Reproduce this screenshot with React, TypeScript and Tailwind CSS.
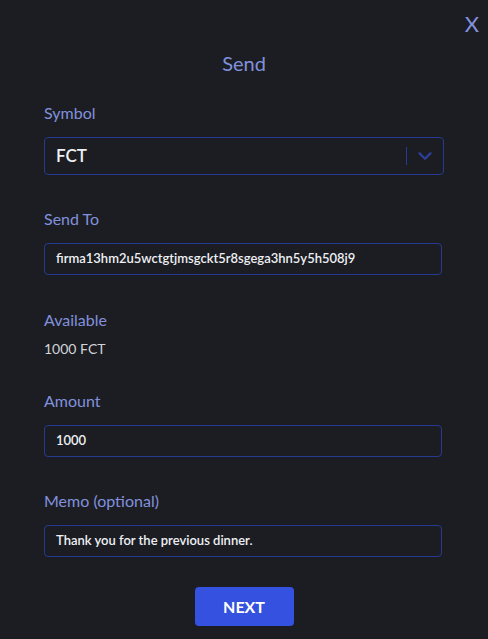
import { ChevronDown } from "lucide-react";

const font = { fontFamily: "Lato, 'Noto Sans', sans-serif" };

function Field({ label, value }: { label: string; value: string }) {
  return (
    <div className="mt-[32px]">
      <label className="block text-[16px] leading-[24px] text-[#8191de]">
        {label}
      </label>
      <div className="mt-[12px] h-[32px] mr-[2px] rounded-[4px] border border-[#263a91] flex items-center px-[11px]">
        <span className="text-[13px] font-semibold text-[#eef0f4]">{value}</span>
      </div>
    </div>
  );
}

export default function App() {
  return (
    <div
      className="relative w-[488px] h-[639px] bg-[#1c1d22] overflow-hidden"
      style={font}
    >
      <button className="absolute top-[10px] right-[9px] text-[22px] leading-[28px] text-[#8191de]">
        X
      </button>
      <div className="px-[44px] pt-[49px]">
        <h2 className="text-center text-[20px] leading-[28px] text-[#8191de]">
          Send
        </h2>

        <div className="mt-[24px]">
          <label className="block text-[16px] leading-[24px] text-[#8191de]">
            Symbol
          </label>
          <div className="mt-[12px] h-[38px] rounded-[4px] border border-[#263a91] flex items-center pl-[11px]">
            <span className="flex-1 text-[17px] font-semibold text-[#eef0f4]">
              FCT
            </span>
            <span className="w-px h-[18px] bg-[#263a91]" />
            <span className="w-[36px] flex justify-center">
              <ChevronDown size={22} strokeWidth={2.6} className="text-[#2c3f9c]" />
            </span>
          </div>
        </div>

        <Field label="Send To" value="firma13hm2u5wctgtjmsgckt5r8sgega3hn5y5h508j9" />

        <div className="mt-[33px]">
          <label className="block text-[16px] leading-[24px] text-[#8191de]">
            Available
          </label>
          <p className="mt-[7px] text-[14px] leading-[20px] text-[#d2d3d8]">
            1000 FCT
          </p>
        </div>

        <div className="-mt-[2px]">
          <Field label="Amount" value="1000" />
        </div>
        <Field label="Memo (optional)" value="Thank you for the previous dinner." />

        <div className="mt-[30px] flex justify-center">
          <button className="w-[99px] h-[39px] rounded-[4px] bg-[#3551e0] text-white text-[16px] font-bold">
            NEXT
          </button>
        </div>
      </div>
    </div>
  );
}
